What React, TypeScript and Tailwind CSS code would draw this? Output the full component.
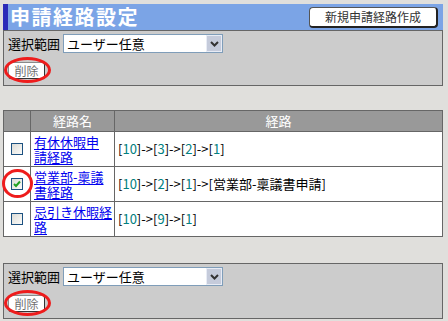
import React from 'react'

type Route = {
  name: string[]
  steps: string[]
  tail?: string
  checked?: boolean
  circled?: boolean
}

const routes: Route[] = [
  { name: ['有休休暇申', '請経路'], steps: ['10', '3', '2', '1'] },
  { name: ['営業部-稟議', '書経路'], steps: ['10', '2', '1'], tail: '営業部-稟議書申請', checked: true, circled: true },
  { name: ['忌引き休暇経', '路'], steps: ['10', '9', '1'] },
]

function Checkbox({ checked }: { checked?: boolean }) {
  return (
    <div className="w-[12px] h-[12px] border border-[#1c5180] bg-gradient-to-br from-[#dcdcd7] to-[#fbfbf9] flex items-center justify-center">
      {checked && (
        <svg width="8" height="8" viewBox="0 0 8 8">
          <path d="M1 4 L3 6 L7 1.5" stroke="#21a121" strokeWidth="2" fill="none" />
        </svg>
      )}
    </div>
  )
}

function Circle({ className }: { className: string }) {
  return <div className={`absolute rounded-[50%] border-[3px] border-[#ee1c1c] pointer-events-none ${className}`} />
}

function ScopeBar() {
  return (
    <div className="relative bg-[#cccccc] border border-[#666666] pl-[4px] pt-[3px] pb-[6px]">
      <div className="flex items-center gap-[3px]">
        <span className="text-[13px] leading-[16px] text-black">選択範囲</span>
        <div className="w-[160px] h-[19px] bg-white border border-[#7f9db9] flex items-center">
          <span className="flex-1 pl-[3px] text-[13px] leading-[16px] text-black">ユーザー任意</span>
          <div className="w-[16px] h-[17px] bg-[#c5cbdb] border border-[#e8ecf5] flex items-center justify-center">
            <svg width="9" height="6" viewBox="0 0 9 6">
              <path d="M1 1 L4.5 4.5 L8 1" stroke="#333" strokeWidth="2" fill="none" />
            </svg>
          </div>
        </div>
      </div>
      <div className="mt-[9px] flex">
        <button className="w-[37px] h-[17px] bg-white border border-[#8a8a8a] border-r-[#333] border-b-[#333] rounded-[3px] text-[12px] leading-[14px] text-[#707070]">
          削除
        </button>
      </div>
      <Circle className="left-[0px] bottom-[2px] w-[47px] h-[26px]" />
    </div>
  )
}

export default function App() {
  return (
    <div className="w-[448px] h-[321px] bg-[#e0dfdc] pt-[4px] pl-[3px] pr-[5px] font-['Noto_Sans_CJK_JP',sans-serif] overflow-hidden">
      {/* Header */}
      <div className="h-[26px] bg-[#7ba4e6] border-l-[5px] border-[#2b2bb8] flex items-center justify-between pr-[5px]">
        <h1 className="pl-[2px] text-[20px] leading-[24px] font-bold text-white tracking-[1.5px]">申請経路設定</h1>
        <button className="w-[129px] h-[21px] bg-white border border-[#555] border-r-[2px] border-b-[2px] border-r-[#222] border-b-[#222] rounded-[4px] text-[12px] leading-[14px] text-[#333]">
          新規申請経路作成
        </button>
      </div>

      <ScopeBar />

      {/* Routes table */}
      <table className="mt-[24px] w-[440px] border-collapse border border-[#666666] bg-white text-[13px] leading-[16px]">
        <thead>
          <tr className="h-[21px] bg-[#999999] text-white">
            <th className="w-[27px] border border-[#666666]"></th>
            <th className="w-[84px] border border-[#666666] font-normal">経路名</th>
            <th className="border border-[#666666] font-normal">経路</th>
          </tr>
        </thead>
        <tbody>
          {routes.map((r, i) => (
            <tr key={i} className="h-[35px]">
              <td className="relative border border-[#666666] align-middle">
                <div className="flex justify-center">
                  <Checkbox checked={r.checked} />
                </div>
                {r.circled && <Circle className="left-[-2px] top-[2px] w-[31px] h-[29px]" />}
              </td>
              <td className="border border-[#666666] pl-[3px] pr-[2px] py-[1px] whitespace-nowrap leading-[15px]">
                <a href="#" className="text-[#0000ee] underline underline-offset-2">
                  {r.name[0]}
                  <br />
                  {r.name[1]}
                </a>
              </td>
              <td className="border border-[#666666] pl-[3px] text-black whitespace-nowrap">
                {r.steps.map((s, j) => (
                  <span key={j}>
                    {j > 0 && '->'}[<span className="text-[#008080]">{s}</span>]
                  </span>
                ))}
                {r.tail && <span>{'->'}[{r.tail}]</span>}
              </td>
            </tr>
          ))}
        </tbody>
      </table>

      <div className="mt-[26px]">
        <ScopeBar />
      </div>
    </div>
  )
}
